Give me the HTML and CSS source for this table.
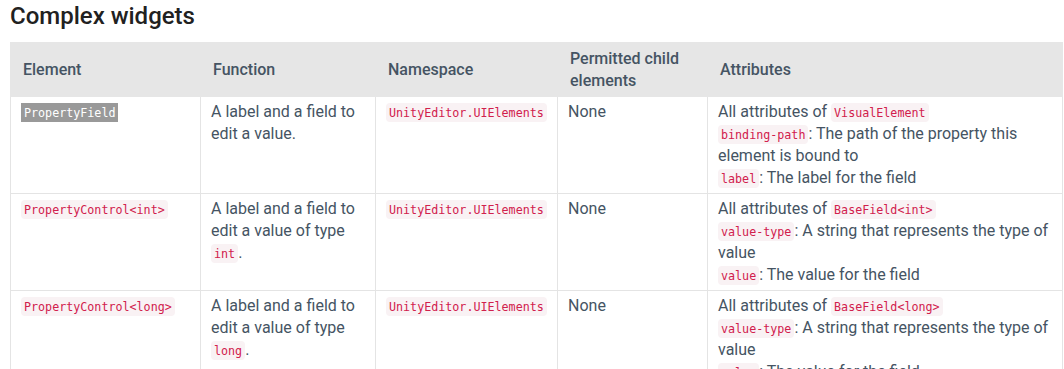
FILE: index.html
```html
<!DOCTYPE html>
<html lang="en">
<head>
    <meta charset="UTF-8">
    <title>Complex widgets</title>
    <link rel="stylesheet" href="styles.css">
</head>
<body>
    <h2>Complex widgets</h2>
    <table class="widgets">
        <colgroup>
            <col class="c-element">
            <col class="c-function">
            <col class="c-namespace">
            <col class="c-children">
            <col class="c-attrs">
        </colgroup>
        <thead>
            <tr>
                <th>Element</th>
                <th>Function</th>
                <th>Namespace</th>
                <th>Permitted child elements</th>
                <th>Attributes</th>
            </tr>
        </thead>
        <tbody>
            <tr>
                <td><code class="selected">PropertyField</code></td>
                <td>A label and a field to edit a value.</td>
                <td><code>UnityEditor.UIElements</code></td>
                <td>None</td>
                <td>All attributes of <code>VisualElement</code><br>
                    <code>binding-path</code>: The path of the property this element is bound to<br>
                    <code>label</code>: The label for the field</td>
            </tr>
            <tr>
                <td><code>PropertyControl&lt;int&gt;</code></td>
                <td>A label and a field to edit a value of type <code>int</code>.</td>
                <td><code>UnityEditor.UIElements</code></td>
                <td>None</td>
                <td>All attributes of <code>BaseField&lt;int&gt;</code><br>
                    <code>value-type</code>: A string that represents the type of value<br>
                    <code>value</code>: The value for the field</td>
            </tr>
            <tr>
                <td><code>PropertyControl&lt;long&gt;</code></td>
                <td>A label and a field to edit a value of type <code>long</code>.</td>
                <td><code>UnityEditor.UIElements</code></td>
                <td>None</td>
                <td>All attributes of <code>BaseField&lt;long&gt;</code><br>
                    <code>value-type</code>: A string that represents the type of value<br>
                    <code>value</code>: The value for the field</td>
            </tr>
        </tbody>
    </table>
</body>
</html>
```

FILE: styles.css
```css
* {
    margin: 0;
    padding: 0;
    box-sizing: border-box;
}
body {
    font-family: Roboto, 'Liberation Sans', sans-serif;
    background-color: #ffffff;
    color: #455463;
    padding: 0 10px;
}
h2 {
    font-size: 24px;
    font-weight: 500;
    color: #212121;
    line-height: 32px;
    margin-bottom: 10px;
}
.widgets {
    width: 1052px;
    border-collapse: collapse;
    table-layout: fixed;
    font-size: 16px;
    line-height: 22px;
}
.c-element { width: 190px; }
.c-function { width: 175px; }
.c-namespace { width: 182px; }
.c-children { width: 150px; }
.c-attrs { width: 355px; }
th {
    background-color: #e6e6e6;
    text-align: left;
    font-weight: 500;
    padding: 5px 12px 4px 12px;
    vertical-align: middle;
    border: 1px solid #e6e6e6;
}
td {
    padding: 4px 11px 4px 10px;
    vertical-align: top;
    border: 1px solid #e4e4e4;
}
code {
    font-family: 'DejaVu Sans Mono', 'Liberation Mono', monospace;
    font-size: 11.7px;
    line-height: 1;
    color: #d1204c;
    background-color: #f9f2f4;
    border-radius: 4px;
    padding: 3px 3px 2px 3px;
}
code.selected {
    color: #ffffff;
    background-color: #999999;
    border-radius: 0;
}
```
